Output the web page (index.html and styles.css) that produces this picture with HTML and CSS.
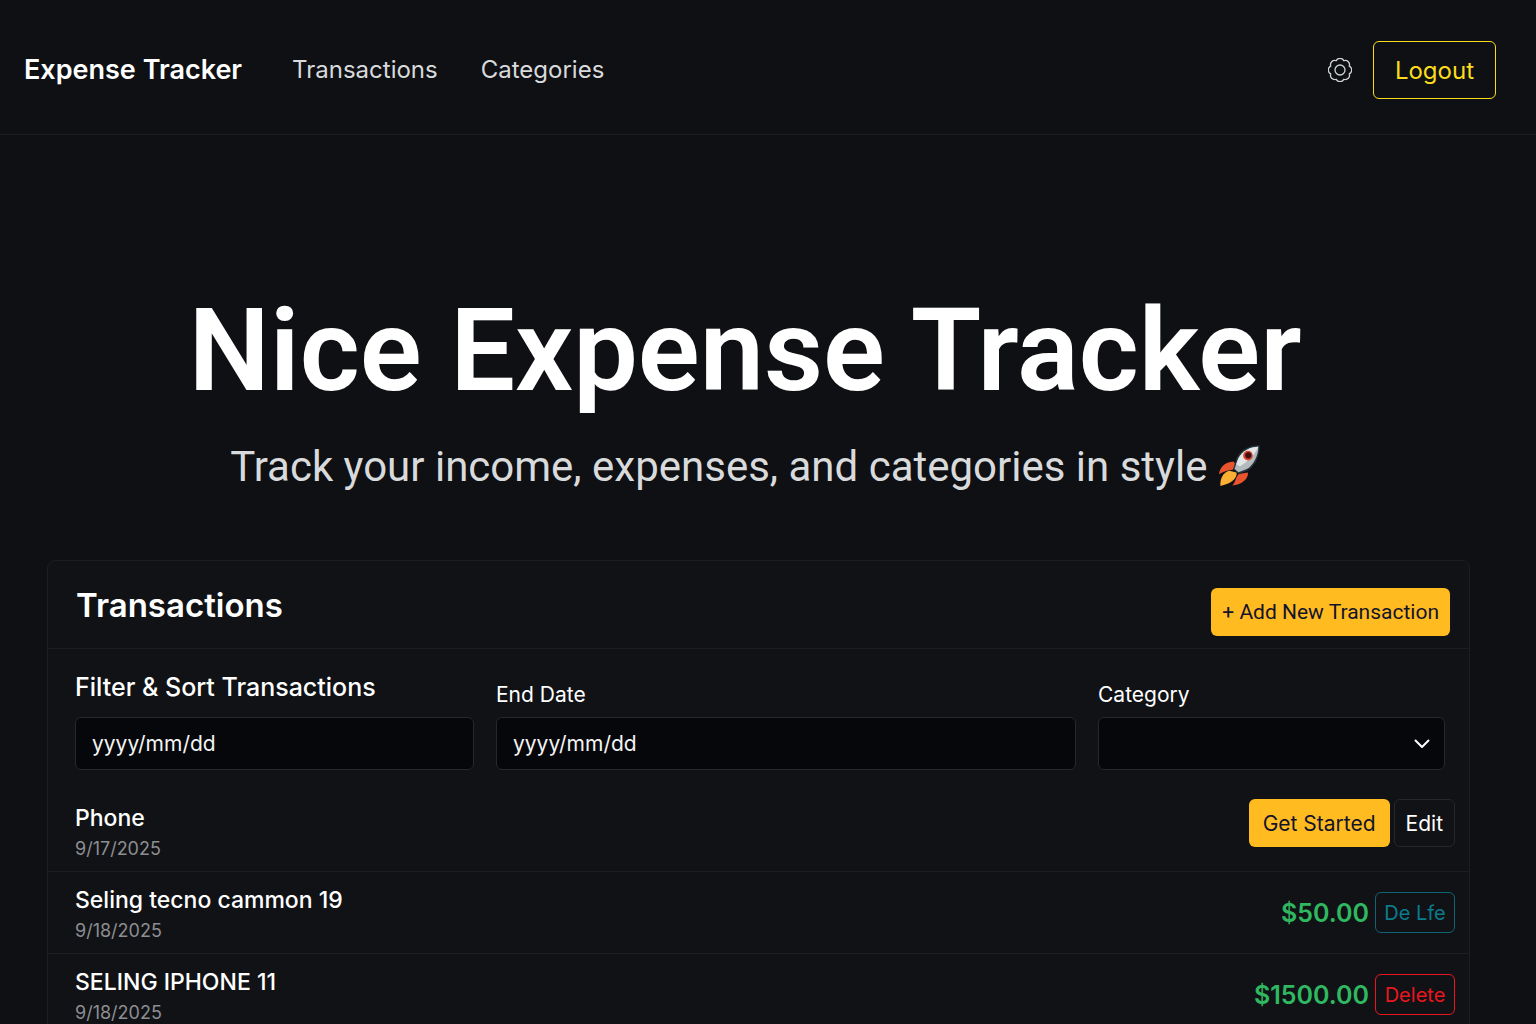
FILE: index.html
```html
<!DOCTYPE html>
<html lang="en">
<head>
<meta charset="utf-8">
<meta name="viewport" content="width=device-width, initial-scale=1">
<title>Expense Tracker</title>
<link rel="stylesheet" href="styles.css">
</head>
<body>
<header class="navbar">
  <a class="brand" href="#">Expense Tracker</a>
  <nav class="nav-links">
    <a href="#transactions">Transactions</a>
    <a href="#categories">Categories</a>
  </nav>
  <div class="nav-actions">
    <button class="icon-button" type="button" aria-label="Settings">
      <svg viewBox="0 0 24 24" width="24" height="24" fill="none" stroke="currentColor" stroke-width="1.3" stroke-linejoin="round">
        <path d="M8.170 2.760A4.200 4.200 0 0 1 15.830 2.760A4.200 4.200 0 0 1 21.240 8.170A4.200 4.200 0 0 1 21.240 15.830A4.200 4.200 0 0 1 15.830 21.240A4.200 4.200 0 0 1 8.170 21.240A4.200 4.200 0 0 1 2.760 15.830A4.200 4.200 0 0 1 2.760 8.170A4.200 4.200 0 0 1 8.170 2.760Z"/>
        <circle cx="12" cy="12" r="5"/>
      </svg>
    </button>
    <button class="btn btn-logout" type="button">Logout</button>
  </div>
</header>
<main>
  <section class="hero">
    <h1>Nice Expense Tracker</h1>
    <p>Track your income, expenses, and categories in style
      <svg class="rocket" viewBox="22 20 120 122" role="img" aria-label="rocket">
        <path fill="#e9542f" d="M24 105C26 86 40 69 66 68L74 78L64 92C50 93 36 98 24 105Z"/>
        <path fill="#e9542f" d="M62 138C72 130 72 112 82 104L108 100C110 120 88 136 62 138Z"/>
        <path fill="#fbb034" d="M28 139C26 120 36 98 54 95L75 100C78 119 54 134 28 139Z"/>
        <path fill="#24343c" d="M142 21C114 20 88 32 75 58L65 90L80 104L108 94C132 78 142 50 142 21Z"/>
        <path fill="#b4babd" d="M138 25C116 25 92 36 80 59L69 89L80 99L105 90C126 76 138 50 138 25Z"/>
        <path fill="#e3e6e7" d="M138 25C116 25 92 36 80 59L74 76L84 82C98 74 126 54 138 25Z"/>
        <circle cx="108" cy="51" r="14" fill="#d9442c"/>
        <circle cx="109" cy="50" r="9" fill="#3d1013"/>
      </svg>
    </p>
  </section>
  <section class="card" id="transactions">
    <div class="card-header">
      <h2>Transactions</h2>
      <button class="btn btn-primary btn-add" type="button">+ Add New Transaction</button>
    </div>
    <form class="filters">
      <div class="field">
        <label class="filter-title" for="start">Filter &amp; Sort Transactions</label>
        <input id="start" type="text" placeholder="yyyy/mm/dd">
      </div>
      <div class="field">
        <label for="end">End Date</label>
        <input id="end" type="text" placeholder="yyyy/mm/dd">
      </div>
      <div class="field">
        <label for="category">Category</label>
        <div class="select">
          <select id="category"><option></option></select>
          <svg viewBox="0 0 16 10" width="16" height="10" fill="none" stroke="currentColor" stroke-width="2" stroke-linecap="round" stroke-linejoin="round"><path d="M1.500 1.500L8 8L14.500 1.500"/></svg>
        </div>
      </div>
    </form>
    <ul class="transactions">
      <li>
        <div class="info"><h3>Phone</h3><time datetime="2025-09-17">9/17/2025</time></div>
        <div class="actions actions-top">
          <button class="btn btn-primary" type="button">Get Started</button>
          <button class="btn btn-edit" type="button">Edit</button>
        </div>
      </li>
      <li>
        <div class="info"><h3>Seling tecno cammon 19</h3><time datetime="2025-09-18">9/18/2025</time></div>
        <div class="actions">
          <span class="amount">$50.00</span>
          <button class="btn btn-small btn-teal" type="button">De Lfe</button>
        </div>
      </li>
      <li>
        <div class="info"><h3>SELING IPHONE 11</h3><time datetime="2025-09-18">9/18/2025</time></div>
        <div class="actions">
          <span class="amount">$1500.00</span>
          <button class="btn btn-small btn-danger" type="button">Delete</button>
        </div>
      </li>
    </ul>
  </section>
</main>
</body>
</html>
```
FILE: styles.css
```css
* { box-sizing: border-box; margin: 0; padding: 0; }
body {
  background: #0e1014;
  color: #fff;
  font-family: Inter, "Liberation Sans", sans-serif;
  font-size: 21px;
}
a { color: inherit; text-decoration: none; }
button, input, select { font: inherit; color: inherit; }
button { cursor: pointer; }

.navbar {
  display: flex;
  align-items: center;
  gap: 50px;
  padding: 41px 40px 35px 24px;
  border-bottom: 1px solid #1c1e22;
}
.brand { font-size: 27px; line-height: 32px; font-weight: 600; }
.nav-links { display: flex; gap: 43px; font-size: 24px; line-height: 32px; color: #d9dadb; }
.nav-actions { display: flex; align-items: center; gap: 21px; margin-left: auto; }
.icon-button { display: flex; background: none; border: 0; color: #d0d4d4; }

.btn {
  height: 48px;
  border: 1px solid transparent;
  border-radius: 6px;
  background: none;
  white-space: nowrap;
}
.btn-logout { height: 58px; padding: 0 21px; border-color: #fbdc1c; color: #fbdc1c; font-size: 24px; }
.btn-primary { padding: 0 13px; background: #ffbb1f; color: #14132b; }
.btn-add { padding: 0 10px; font-family: Roboto, Inter, sans-serif; }
.btn-edit { padding: 0 11px; border-color: #26272b; }
.btn-small { width: 80px; height: 41px; font-size: 20px; }
.btn-teal { border-color: #0e6377; color: #0b7c8b; }
.btn-danger { border-color: #e8171f; color: #e8171f; }

.hero {
  padding: 156px 94px 65px 48px;
  font-family: Roboto, Inter, sans-serif;
  text-align: center;
}
.hero h1 { font-size: 115px; line-height: 120px; font-weight: 600; white-space: nowrap; }
.hero p { margin-top: 28px; font-size: 42px; line-height: 56px; color: #d9dadb; }
.rocket { width: 42px; height: 42px; vertical-align: -6px; }

.card {
  margin: 0 66px 48px 47px;
  border: 1px solid #1c1e22;
  border-radius: 8px;
  background: #111216;
}
.card-header {
  display: flex;
  align-items: flex-start;
  justify-content: space-between;
  padding: 27px 19px 12px 28px;
  border-bottom: 1px solid #1c1e22;
}
.card-header h2 { font-size: 33px; line-height: 34px; font-weight: 600; }

.filters {
  display: grid;
  grid-template-columns: 399fr 580fr 347fr;
  gap: 22px;
  align-items: end;
  padding: 22px 24px 19px 27px;
}
.field { display: flex; flex-direction: column; gap: 8px; }
.field label { line-height: 28px; }
.field .filter-title { margin-bottom: 6px; line-height: 32px; font-size: 25px; font-weight: 500; }
.field input, .field select {
  width: 100%;
  height: 53px;
  padding: 0 16px;
  border: 1px solid #27282c;
  border-radius: 6px;
  background: #06070a;
}
.field input::placeholder { color: #f4f4f4; opacity: 1; }
.select { display: grid; align-items: center; }
.select select, .select svg { grid-area: 1 / 1; }
.select select { appearance: none; }
.select svg { justify-self: end; margin-right: 15px; pointer-events: none; }

.transactions { list-style: none; }
.transactions li {
  display: flex;
  align-items: center;
  justify-content: space-between;
  min-height: 82px;
  padding: 0 14px 0 27px;
}
.transactions li + li { border-top: 1px solid #1c1e22; }
.info { align-self: flex-end; padding-bottom: 9px; }
.info h3 { font-size: 23px; line-height: 32px; font-weight: 500; }
.info time { display: block; margin-top: 2px; font-size: 18px; line-height: 26px; color: #8d8e91; }
.actions { display: flex; align-items: center; gap: 6px; }
.actions-top { align-self: flex-start; gap: 4px; padding-top: 10px; }
.amount { font-size: 25px; font-weight: 600; color: #2fb860; }
```
